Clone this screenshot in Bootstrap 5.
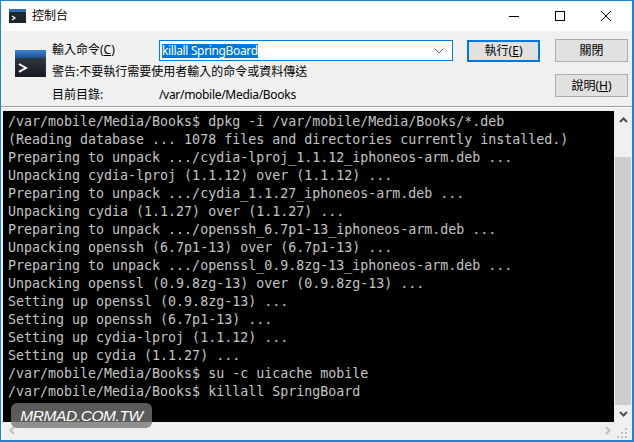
<!DOCTYPE html>
<html lang="zh-Hant">
<head>
<meta charset="utf-8">
<title>控制台</title>
<link href="https://cdn.jsdelivr.net/npm/bootstrap@5.3.0/dist/css/bootstrap.min.css" rel="stylesheet">
<style>
html,body{margin:0;height:442px;overflow:hidden;background:#fff}
body,.cw-btn{font-family:"Noto Sans","Noto Sans CJK TC",sans-serif;font-size:12px;line-height:16px;color:#000}
.cw-win{position:relative;width:634px;height:442px;border:1px solid #1883d7;border-width:1px 2px 2px 1px;background:#f0f0f0}
.cw-title{height:30px;background:#fff;padding-left:8px}
.cw-title svg{margin-right:6px}
.cw-ctrls{margin-left:auto}
.cw-ctrl{width:46px;height:30px}
.cw-panel{height:76px;padding:8px 4px 0 14px;border-bottom:1px solid #a0a0a0;box-shadow:0 1px 0 #fff}
.cw-bigicon{margin-top:11px;margin-right:6px}
.cw-fields{width:402px}
.cw-row{display:flex;align-items:center}
.cw-lab{width:107px;flex:none}
.cw-combo{width:294px;height:21px;border:1px solid #0078d7;background:#fff;padding:0 8px 0 2px;margin-top:1px}
.cw-sel{background:#0078d7;color:#fff;line-height:14px;letter-spacing:-.35px}
.cw-warn{margin-top:3px}
.cw-path{margin-top:7px}
.cw-path .cw-val{letter-spacing:-.3px}
.cw-btn{width:73px;height:23px;padding:0;border-radius:0;background:#e1e1e1;border:1px solid #adadad;--bs-btn-line-height:16px}
.cw-btn.cw-def{border:2px solid #0078d7;margin:1px 15px 0 14px;height:22px}
.cw-right{gap:12px}
.cw-body{height:331px;padding:2px 0 0 2px;margin-top:2px}
.cw-term{width:611px;height:311px;background:#000;color:#c4c4c4;font-family:"DejaVu Sans Mono",monospace;font-size:13.3px;line-height:18px;padding:2px 0 0 5px;white-space:pre;overflow:hidden}
.cw-vbar{width:17px;height:311px;margin-left:1px;background:#f0f0f0}
.cw-thumb{flex:1;background:#cdcdcd;margin:29px 1px 0 0}
.cw-arrow{height:17px;flex:none}
.cw-hbar{height:17px;width:628px;background:#f0f0f0;padding:0 3px 0 6px}
.cw-hright{margin-right:6px}
.cw-mark{position:absolute;left:10px;top:402px;width:141px;height:25px;border-radius:6px;background:rgba(117,117,117,.78);color:#fff;font-family:"Liberation Sans",sans-serif;font-style:italic;font-size:15.5px;line-height:25px;text-align:center;letter-spacing:-.4px}
</style>
</head>
<body>
<div class="cw-win d-flex flex-column">
  <div class="cw-title d-flex align-items-center">
    <svg width="17" height="14" viewBox="0 0 17 14"><rect width="17" height="14" fill="#1f2630"/><rect width="17" height="3" fill="#2f6db5"/><path d="M3 7l3 2-3 2" fill="none" stroke="#fff" stroke-width="1.2"/></svg>
    <span>控制台</span>
    <div class="cw-ctrls d-flex">
      <div class="cw-ctrl d-flex align-items-center justify-content-center"><svg width="10" height="10"><path d="M0 5.500h10" stroke="#000"/></svg></div>
      <div class="cw-ctrl d-flex align-items-center justify-content-center"><svg width="10" height="10"><rect x=".5" y=".5" width="9" height="9" fill="none" stroke="#000"/></svg></div>
      <div class="cw-ctrl d-flex align-items-center justify-content-center"><svg width="10" height="10"><path d="M0 0l10 10M10 0L0 10" stroke="#000"/></svg></div>
    </div>
  </div>
  <div class="cw-panel d-flex align-items-start">
    <svg class="cw-bigicon" width="31" height="27" viewBox="0 0 31 27"><defs><linearGradient id="g" x1="0" y1="0" x2="0" y2="1"><stop offset="0" stop-color="#3a4452"/><stop offset="1" stop-color="#14181e"/></linearGradient><linearGradient id="b" x1="0" y1="0" x2="0" y2="1"><stop offset="0" stop-color="#3f86d6"/><stop offset="1" stop-color="#1f4f8c"/></linearGradient></defs><rect width="31" height="27" fill="url(#g)"/><rect width="31" height="8" fill="url(#b)"/><path d="M4 14l7 4-7 4" fill="none" stroke="#fff" stroke-width="2"/></svg>
    <div class="cw-fields">
      <div class="cw-row">
        <span class="cw-lab">輸入命令(<u>C</u>)</span>
        <div class="cw-combo d-flex align-items-center">
          <span class="cw-sel">killall SpringBoard</span>
          <svg class="ms-auto" width="10" height="6"><path d="M.5 .5l4.500 4.500 4.500-4.500" fill="none" stroke="#666"/></svg>
        </div>
      </div>
      <div class="cw-warn">警告:不要執行需要使用者輸入的命令或資料傳送</div>
      <div class="cw-row cw-path">
        <span class="cw-lab">目前目錄:</span>
        <span class="cw-val">/var/mobile/Media/Books</span>
      </div>
    </div>
    <button type="button" class="btn cw-btn cw-def">執行(<u>E</u>)</button>
    <div class="cw-right d-flex flex-column">
      <button type="button" class="btn cw-btn">關閉</button>
      <button type="button" class="btn cw-btn">說明(<u>H</u>)</button>
    </div>
  </div>
  <div class="cw-body">
    <div class="d-flex">
      <div class="cw-term">/var/mobile/Media/Books$ dpkg -i /var/mobile/Media/Books/*.deb
(Reading database ... 1078 files and directories currently installed.)
Preparing to unpack .../cydia-lproj_1.1.12_iphoneos-arm.deb ...
Unpacking cydia-lproj (1.1.12) over (1.1.12) ...
Preparing to unpack .../cydia_1.1.27_iphoneos-arm.deb ...
Unpacking cydia (1.1.27) over (1.1.27) ...
Preparing to unpack .../openssh_6.7p1-13_iphoneos-arm.deb ...
Unpacking openssh (6.7p1-13) over (6.7p1-13) ...
Preparing to unpack .../openssl_0.9.8zg-13_iphoneos-arm.deb ...
Unpacking openssl (0.9.8zg-13) over (0.9.8zg-13) ...
Setting up openssl (0.9.8zg-13) ...
Setting up openssh (6.7p1-13) ...
Setting up cydia-lproj (1.1.12) ...
Setting up cydia (1.1.27) ...
/var/mobile/Media/Books$ su -c uicache mobile
/var/mobile/Media/Books$ killall SpringBoard
</div>
      <div class="cw-vbar d-flex flex-column">
        <div class="cw-arrow d-flex align-items-center justify-content-center"><svg width="9" height="6"><path d="M1 5l3.500-3.500 3.500 3.500" fill="none" stroke="#505050" stroke-width="2"/></svg></div>
        <div class="cw-thumb"></div>
        <div class="cw-arrow d-flex align-items-center justify-content-center"><svg width="9" height="6"><path d="M1 1l3.500 3.500 3.500-3.500" fill="none" stroke="#505050" stroke-width="2"/></svg></div>
      </div>
    </div>
    <div class="cw-hbar d-flex align-items-center">
      <svg width="6" height="9"><path d="M5 1L1.500 4.500 5 8" fill="none" stroke="#bfbfbf" stroke-width="2"/></svg>
      <svg class="ms-auto cw-hright" width="6" height="9"><path d="M1 1l3.500 3.500L1 8" fill="none" stroke="#bfbfbf" stroke-width="2"/></svg>
      <svg width="11" height="11" class="mt-1"><path fill="#bdbdbd" d="M8 1h2v2H8zM4 5h2v2H4zM8 5h2v2H8zM0 9h2v2H0zM4 9h2v2H4zM8 9h2v2H8z"/></svg>
    </div>
  </div>
  <div class="cw-mark">MRMAD.COM.TW</div>
</div>
<script src="https://cdn.jsdelivr.net/npm/bootstrap@5.3.0/dist/js/bootstrap.bundle.min.js"></script>
</body>
</html>
